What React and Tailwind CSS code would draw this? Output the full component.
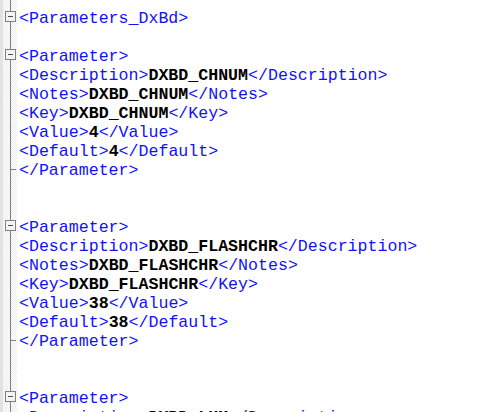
import React from "react";

// fold marker kinds: line, box, end
const lines = [
  { fold: "line" },
  { fold: "box", tag: "<Parameters_DxBd>" },
  { fold: "line" },
  { fold: "box", tag: "<Parameter>" },
  { fold: "line", name: "Description", value: "DXBD_CHNUM" },
  { fold: "line", name: "Notes", value: "DXBD_CHNUM" },
  { fold: "line", name: "Key", value: "DXBD_CHNUM" },
  { fold: "line", name: "Value", value: "4" },
  { fold: "line", name: "Default", value: "4" },
  { fold: "end", tag: "</Parameter>" },
  { fold: "line" },
  { fold: "line" },
  { fold: "box", tag: "<Parameter>" },
  { fold: "line", name: "Description", value: "DXBD_FLASHCHR" },
  { fold: "line", name: "Notes", value: "DXBD_FLASHCHR" },
  { fold: "line", name: "Key", value: "DXBD_FLASHCHR" },
  { fold: "line", name: "Value", value: "38" },
  { fold: "line", name: "Default", value: "38" },
  { fold: "end", tag: "</Parameter>" },
  { fold: "line" },
  { fold: "line" },
  { fold: "box", tag: "<Parameter>" },
  { fold: "line", name: "Description", value: "DXBD_LUM" },
];

const FoldMark = ({ kind }) => (
  <svg width="17" height="19" className="block" shapeRendering="crispEdges">
    {kind === "box" ? (
      <>
        <line x1="10.5" y1="0" x2="10.5" y2="3" stroke="#808080" />
        <line x1="10.5" y1="14" x2="10.5" y2="19" stroke="#808080" />
        <rect x="5.5" y="3.5" width="10" height="10" fill="#f4f4f4" stroke="#808080" />
        <line x1="8" y1="8.5" x2="13" y2="8.5" stroke="#505050" />
      </>
    ) : (
      <line x1="10.5" y1="0" x2="10.5" y2="19" stroke="#808080" />
    )}
    {kind === "end" && <line x1="10.5" y1="9.5" x2="16" y2="9.5" stroke="#808080" />}
  </svg>
);

const Line = ({ line }) => (
  <div className="flex h-[19px] items-start">
    <div className="flex h-[19px] w-[17px] shrink-0 bg-[repeating-conic-gradient(#ececec_0%_25%,#ffffff_0%_50%)] bg-[length:2px_2px]">
      <div className="absolute h-[19px] w-[3px] bg-[#e2e2e2]" />
      <FoldMark kind={line.fold} />
    </div>
    <div className="pl-[2px] pt-[1px] whitespace-pre">
      {line.tag && <span className="text-[#1010ff]">{line.tag}</span>}
      {line.name && (
        <>
          <span className="text-[#1010ff]">{`<${line.name}>`}</span>
          <span className="font-bold text-black">{line.value}</span>
          <span className="text-[#1010ff]">{`</${line.name}>`}</span>
        </>
      )}
    </div>
  </div>
);

export default function App() {
  return (
    <div className="h-[412px] w-[500px] overflow-hidden bg-white font-['Liberation_Mono',monospace] text-[16.6px] leading-[19px]">
      <div className="-mt-[11px]">
        {lines.map((line, i) => (
          <Line key={i} line={line} />
        ))}
      </div>
    </div>
  );
}
